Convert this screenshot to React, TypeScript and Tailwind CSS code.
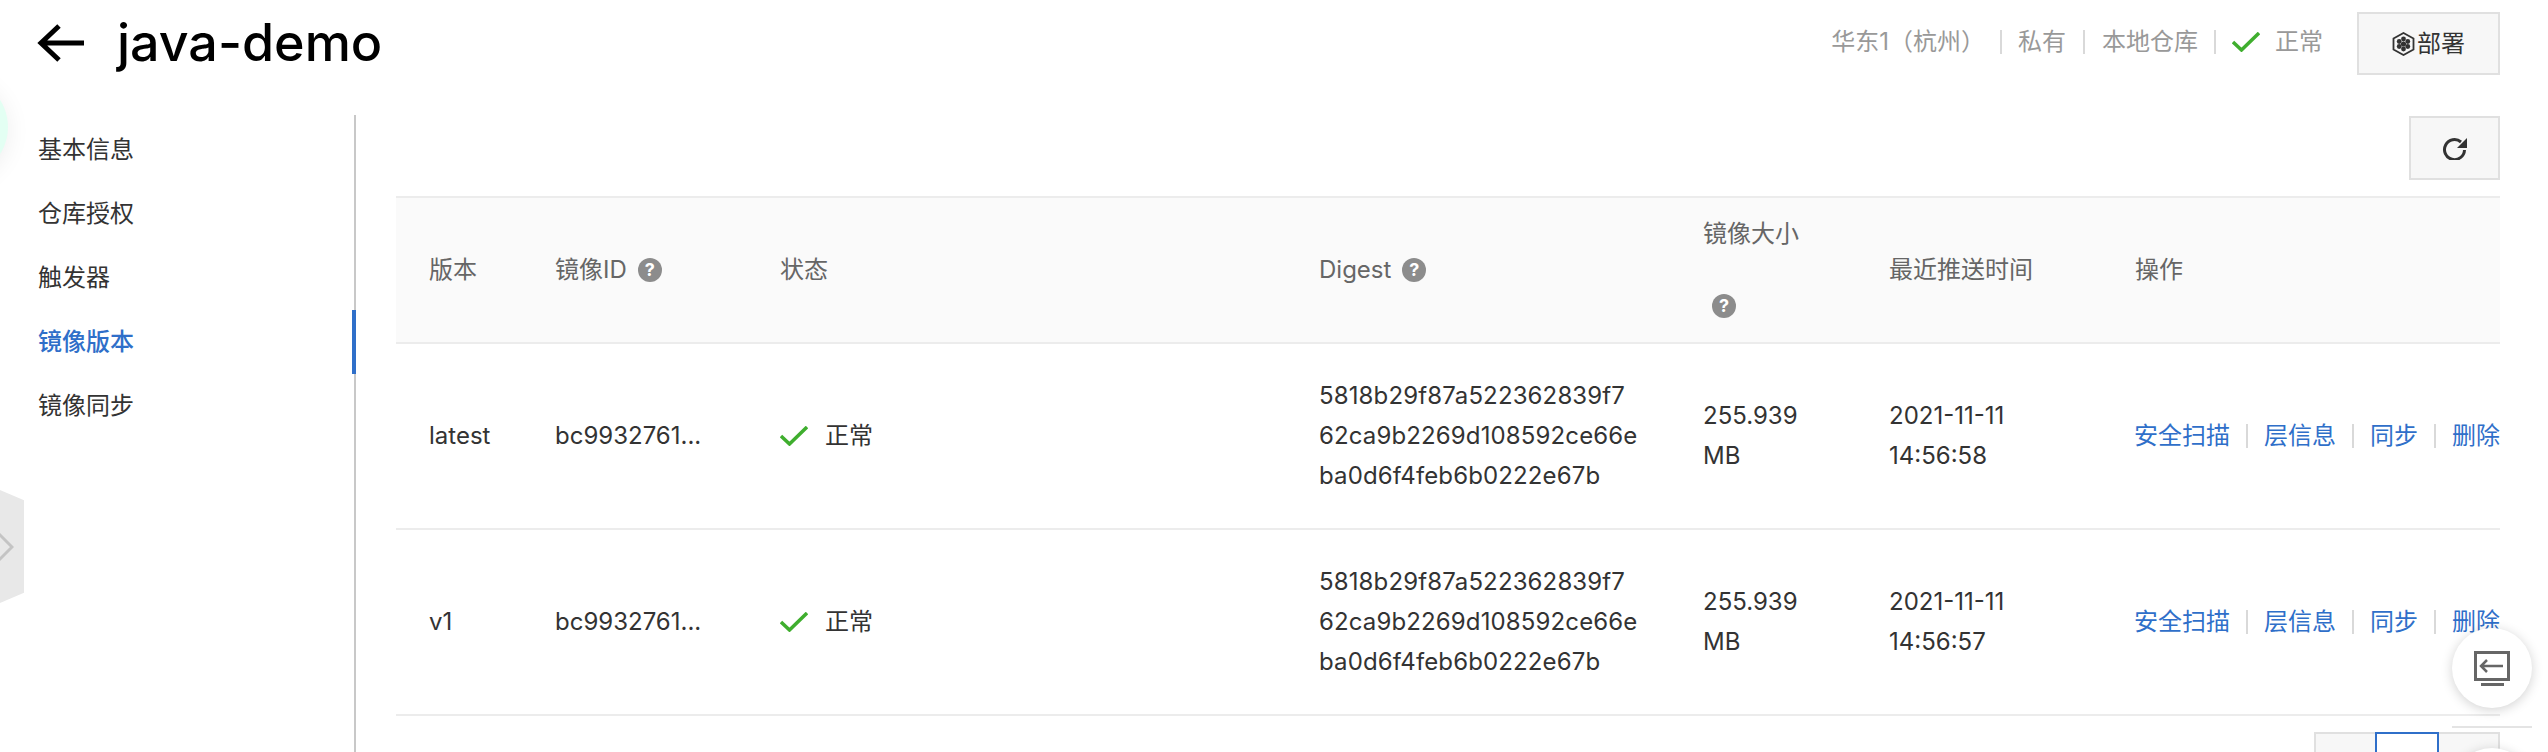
const cjk = "font-['Inter','Noto_Sans_CJK_SC',sans-serif]";

const menu = ["基本信息", "仓库授权", "触发器", "镜像版本", "镜像同步"];

const rows = [
  { tag: "latest", time: "14:56:58" },
  { tag: "v1", time: "14:56:57" },
];

function Help() {
  return (
    <span className="inline-flex h-6 w-6 items-center justify-center rounded-full bg-[#8c8c8c] text-[18px] leading-none font-bold text-white">
      ?
    </span>
  );
}

function OkMark() {
  return (
    <svg viewBox="0 0 28 20" className="h-5 w-7 shrink-0" fill="none" stroke="#3fae2e" strokeWidth="3.5">
      <path d="M1 10l8.500 8L27 1" />
    </svg>
  );
}

function DeployIcon() {
  return (
    <svg viewBox="0 0 23 24" className="h-6 w-[23px]" fill="none" stroke="#333" strokeWidth="1.8">
      <path d="M11.500 1 21.500 6.500v11L11.500 23l-10-5.500v-11z" />
      <g fill="#333" stroke="none">
        <circle cx="11.500" cy="12" r="2.600" />
        <circle cx="11.500" cy="7" r="2.400" />
        <circle cx="11.500" cy="17" r="2.400" />
        <circle cx="7.200" cy="9.500" r="2.400" />
        <circle cx="15.800" cy="9.500" r="2.400" />
        <circle cx="7.200" cy="14.500" r="2.400" />
        <circle cx="15.800" cy="14.500" r="2.400" />
      </g>
    </svg>
  );
}

function RefreshIcon() {
  return (
    <svg viewBox="0 0 26 24" className="h-6 w-[26px]" fill="none">
      <path d="M19 6A10 10 0 1 0 22.500 14" stroke="#333" strokeWidth="3" />
      <path d="M25 2v10H15z" fill="#333" />
    </svg>
  );
}

function Sep({ className }: { className: string }) {
  return <span className={`h-6 w-0.5 shrink-0 bg-[#d9d9d9] ${className}`} />;
}

export default function App() {
  return (
    <div className={`relative h-[752px] w-[2548px] overflow-hidden bg-white ${cjk}`}>
      {/* page header */}
      <header className="flex h-[115px] items-start justify-between pr-12 pl-9">
        <div className="flex h-[86px] items-center">
          <svg viewBox="0 0 48 38" className="h-[38px] w-12" fill="none" stroke="#000" strokeWidth="5">
            <path d="M48 19H5M23 2 5 19l18 17" />
          </svg>
          <h1 className="ml-[33px] text-[52px] leading-none font-medium text-black">java-demo</h1>
        </div>
        <div className="flex items-start text-[24px] text-[#999]">
          <div className="flex h-[84px] items-center">
            <span>华东1（杭州）</span>
            <Sep className="mr-[16px] ml-[15px]" />
            <span>私有</span>
            <Sep className="mx-[17px]" />
            <span>本地仓库</span>
            <Sep className="mr-[16px] ml-[16px]" />
            <OkMark />
            <span className="ml-[15px]">正常</span>
          </div>
          <button className="mt-3 ml-[34px] flex h-[63px] w-[143px] items-center justify-center gap-[2px] border-2 border-[#e0e0e0] bg-[#f7f7f7] text-[#333]">
            <DeployIcon />
            部署
          </button>
        </div>
      </header>

      <div className="flex pr-12">
        {/* side menu */}
        <nav className="h-[637px] w-[356px] shrink-0 border-r-2 border-[#c8c8c8] pt-[3px] pl-[38px]">
          {menu.map((m, i) => (
            <a
              key={m}
              className={
                i === 3
                  ? "relative -mr-[2px] flex h-16 items-center text-[24px] font-medium text-[#2f6fc9]"
                  : "flex h-16 items-center text-[24px] text-[#333]"
              }
            >
              {m}
              {i === 3 && <span className="absolute top-0 right-0 h-16 w-1 bg-[#2f6fc9]" />}
            </a>
          ))}
        </nav>

        <main className="ml-10 min-w-0 flex-1">
          <div className="flex h-[81px] justify-end">
            <button className="mt-px flex h-16 w-[91px] items-center justify-center border-2 border-[#e0e0e0] bg-[#f7f7f7]">
              <RefreshIcon />
            </button>
          </div>

          <div className="grid grid-cols-[127px_225px_539px_384px_186px_246px_1fr] text-[24px] leading-10 text-[#333]">
            {/* table head */}
            <div className="col-span-7 grid h-[148px] grid-cols-subgrid items-center border-y-2 border-[#ececec] bg-[#fafafa] pb-[2px] text-[#666]">
              <div className="pl-[33px]">版本</div>
              <div className="flex items-center gap-[11px] pl-8">
                镜像ID
                <Help />
              </div>
              <div className="pl-8">状态</div>
              <div className="flex items-center gap-[11px] pl-8">
                Digest
                <Help />
              </div>
              <div className="pl-8">
                <div className="leading-[72px]">镜像大小</div>
                <div className="flex h-[72px] items-center pl-[9px]">
                  <Help />
                </div>
              </div>
              <div className="pl-8">最近推送时间</div>
              <div className="pl-8">操作</div>
            </div>

            {rows.map((r) => (
              <div
                key={r.tag}
                className="col-span-7 grid h-[186px] grid-cols-subgrid items-center border-b-2 border-[#ececec]"
              >
                <div className="pl-[33px]">{r.tag}</div>
                <div className="pl-8">bc9932761...</div>
                <div className="flex items-center pl-8">
                  <OkMark />
                  <span className="ml-[17px]">正常</span>
                </div>
                <div className="pl-8 tracking-[0.13px] break-all">
                  5818b29f87a522362839f7
                  <br />
                  62ca9b2269d108592ce66e
                  <br />
                  ba0d6f4feb6b0222e67b
                </div>
                <div className="pl-8">
                  255.939
                  <br />
                  MB
                </div>
                <div className="pl-8">
                  2021-11-11
                  <br />
                  {r.time}
                </div>
                <div className="flex items-center pl-[31px] whitespace-nowrap text-[#2f6fc9]">
                  <a>安全扫描</a>
                  <Sep className="mx-4" />
                  <a>层信息</a>
                  <Sep className="mx-4" />
                  <a>同步</a>
                  <Sep className="mx-4" />
                  <a>删除</a>
                </div>
              </div>
            ))}
          </div>

          {/* pagination, cut off by the window */}
          <div className="mt-4 flex justify-end">
            <div className="flex h-10 w-[186px] border-2 border-b-0 border-[#e0e0e0] bg-[#f7f7f7]">
              <span className="flex-1" />
              <span className="-mt-0.5 h-12 w-16 border-2 border-[#2f6fc9] bg-white" />
              <span className="flex-1" />
            </div>
          </div>
        </main>
      </div>

      {/* left edge decorations */}
      <div className="absolute top-[77px] -left-[92px] h-[100px] w-[100px] rounded-full bg-[#e3fff3] shadow-[0_4px_24px_rgba(0,0,0,0.07)]" />
      <div className="absolute top-[490px] left-0 flex h-[113px] w-6 items-center bg-[#e8e8e8] [clip-path:polygon(0_0,100%_9%,100%_91%,0_100%)]">
        <svg viewBox="0 0 14 30" className="h-[30px] w-[14px]" fill="none" stroke="#c4c4c4" strokeWidth="3">
          <path d="M-1 2 12 15-1 28" />
        </svg>
      </div>

      {/* floating buttons */}
      <button className="absolute top-[628px] left-[2452px] flex h-20 w-20 items-center justify-center rounded-full bg-white shadow-[0_2px_12px_rgba(0,0,0,0.18)]">
        <svg viewBox="0 0 36 35" className="h-[35px] w-9" fill="none" stroke="#666" strokeWidth="3">
          <path d="M1.500 1.500h33v27h-33z" />
          <path d="M7 15h22M13 9l-6 6 6 6" strokeWidth="2.500" />
          <path d="M7 33.500h23" />
        </svg>
      </button>
      <div className="absolute top-[726px] left-[2452px] h-0.5 w-20 bg-[#e4e4e4]" />
      <div className="absolute top-[748px] left-[2452px] h-20 w-20 rounded-full bg-white shadow-[0_2px_12px_rgba(0,0,0,0.18)]" />
    </div>
  );
}
